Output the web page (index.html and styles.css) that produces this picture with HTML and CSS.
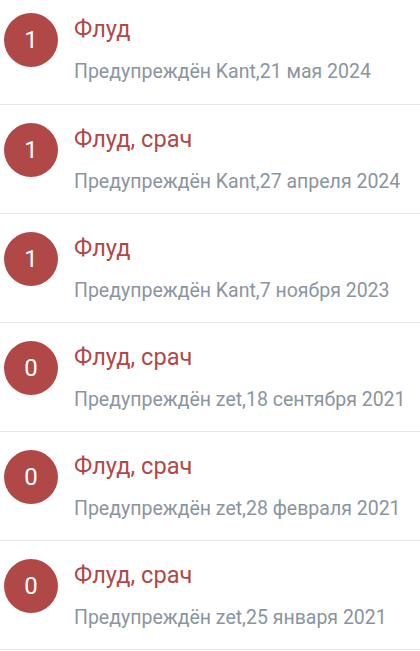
FILE: index.html
```html
<!DOCTYPE html>
<html lang="ru">
<head>
<meta charset="utf-8">
<link rel="stylesheet" href="styles.css">
</head>
<body>
<ul class="list">
  <li class="row first">
    <div class="badge">1</div>
    <div class="info"><div class="title">Флуд</div><div class="meta">Предупреждён Kant,21 мая 2024</div></div>
  </li>
  <li class="row">
    <div class="badge">1</div>
    <div class="info"><div class="title">Флуд, срач</div><div class="meta">Предупреждён Kant,27 апреля 2024</div></div>
  </li>
  <li class="row">
    <div class="badge">1</div>
    <div class="info"><div class="title">Флуд</div><div class="meta">Предупреждён Kant,7 ноября 2023</div></div>
  </li>
  <li class="row">
    <div class="badge">0</div>
    <div class="info"><div class="title">Флуд, срач</div><div class="meta">Предупреждён zet,18 сентября 2021</div></div>
  </li>
  <li class="row">
    <div class="badge">0</div>
    <div class="info"><div class="title">Флуд, срач</div><div class="meta">Предупреждён zet,28 февраля 2021</div></div>
  </li>
  <li class="row">
    <div class="badge">0</div>
    <div class="info"><div class="title">Флуд, срач</div><div class="meta">Предупреждён zet,25 января 2021</div></div>
  </li>
</ul>
</body>
</html>
```
FILE: styles.css
```css
html, body {
  margin: 0;
  padding: 0;
  background: #ffffff;
  font-family: Roboto, "Noto Sans", sans-serif;
}
.list {
  list-style: none;
  margin: 0;
  padding: 0;
}
.row {
  display: flex;
  align-items: flex-start;
  gap: 16px;
  box-sizing: border-box;
  height: 109px;
  padding: 18px 4px 0;
  border-bottom: 1px solid #e6e6e6;
}
.row.first {
  height: 105px;
  padding-top: 13px;
}
.badge {
  flex: none;
  width: 54px;
  height: 54px;
  border-radius: 50%;
  background: #b04848;
  color: #ffffff;
  font-size: 24px;
  display: flex;
  align-items: center;
  justify-content: center;
}
.info {
  display: flex;
  flex-direction: column;
  gap: 18px;
  padding-top: 2px;
}
.title {
  font-size: 23.6px;
  line-height: 28px;
  color: #b04848;
}
.meta {
  font-size: 19.5px;
  line-height: 22px;
  color: #8a959f;
}
```
